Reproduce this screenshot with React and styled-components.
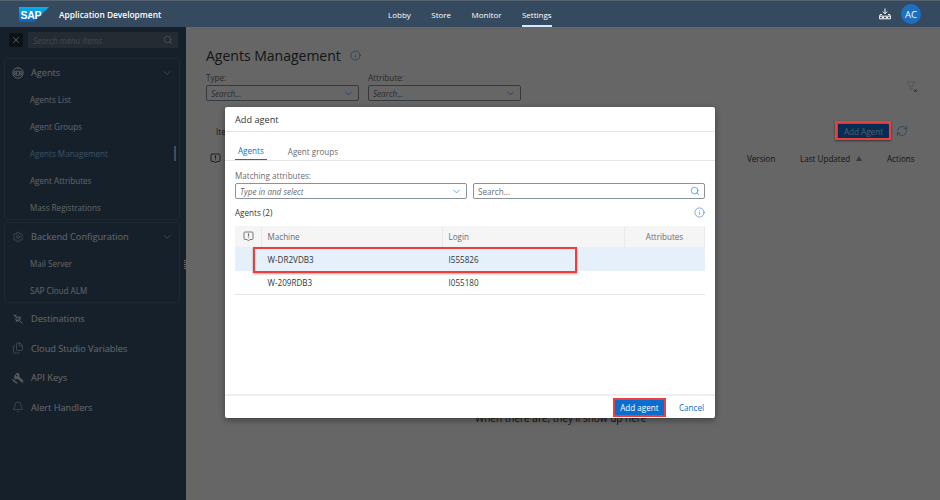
import React from 'react'
import styled, { createGlobalStyle } from 'styled-components'
import { Search, ChevronDown, Info, X, Settings, Bell, Files, RefreshCw } from 'lucide-react'

const GlobalStyle = createGlobalStyle`
  html, body { margin: 0; padding: 0; background: #fff; }
  * { box-sizing: border-box; }
  body { font-family: "Open Sans", "Noto Sans", "Liberation Sans", sans-serif; color: #32363a; }
`

const Page = styled.div`
  position: relative;
  width: 940px;
  height: 500px;
  overflow: hidden;
  display: flex;
  flex-direction: column;
`

const Header = styled.header`
  position: relative;
  z-index: 3;
  height: 27px;
  flex: none;
  background: #354a5f;
  border-top: 1px solid #54616e;
  display: flex;
  align-items: center;
  color: #fff;
`

const Brand = styled.div`
  width: 366px;
  padding-left: 19px;
  display: flex;
  align-items: center;
  gap: 10px;
`

const AppName = styled.span`
  font-size: 8.4px;
  font-weight: 600;
`

const Nav = styled.nav`
  display: flex;
  gap: 20.5px;
  height: 100%;
  padding-left: 22px;
`

const NavItem = styled.a`
  height: 100%;
  display: flex;
  align-items: center;
  font-size: 8px;
  color: #fff;
  border-bottom: 2px solid ${p => (p.$active ? '#d1e8ff' : 'transparent')};
  padding-top: 2px;
`

const Actions = styled.div`
  margin-left: auto;
  padding-right: 19px;
  display: flex;
  align-items: center;
  gap: 10px;
`

const Avatar = styled.div`
  width: 20px;
  height: 20px;
  border-radius: 50%;
  background: #1f6fc0;
  color: #fff;
  font-size: 9.5px;
  font-weight: 500;
  display: flex;
  align-items: center;
  justify-content: center;
`

const Body = styled.div`
  flex: 1;
  display: flex;
  min-height: 0;
`

const Sidebar = styled.aside`
  position: relative;
  width: 186px;
  flex: none;
  background: #37506b;
  padding: 5px 6px 0 4px;
  color: #fff;
`

const SearchRow = styled.div`
  display: flex;
  align-items: center;
  gap: 5px;
  padding: 0 2px 0 5px;
  margin-bottom: 10px;
`

const CloseBtn = styled.button`
  width: 14px;
  height: 14px;
  padding: 0;
  border: 0;
  border-radius: 2px;
  background: #1d2d3e;
  color: #fff;
  display: flex;
  align-items: center;
  justify-content: center;
`

const MenuSearch = styled.div`
  flex: 1;
  height: 16px;
  background: #5e6d7d;
  display: flex;
  align-items: center;
  justify-content: space-between;
  padding: 0 5px;
  font-size: 8.2px;
  font-style: italic;
  color: #a9b4be;
`

const Group = styled.section`
  height: ${p => p.$rows * 27}px;
  border: 1px solid #4a6480;
  border-radius: 3px;
  & + & {
    margin-top: 2px;
  }
`

const GroupHead = styled.div`
  height: 27px;
  display: flex;
  align-items: center;
  gap: 7px;
  padding: 0 6px 0 7px;
  font-size: 9.2px;
`

const Spacer = styled.span`
  margin-left: auto;
  display: flex;
`

const SubItem = styled.div`
  position: relative;
  height: 27px;
  display: flex;
  align-items: center;
  padding-left: 25px;
  font-size: 8.1px;
  color: ${p => (p.$active ? '#91c8f6' : '#f2f4f6')};
`

const ActiveBar = styled.span`
  position: absolute;
  right: 3px;
  top: 6px;
  width: 2px;
  height: 15px;
  background: #91c8f6;
`

const TopList = styled.div`
  margin-top: 1px;
`

const TopItem = styled.div`
  height: 29.5px;
  display: flex;
  align-items: center;
  gap: 7px;
  padding-left: 8px;
  font-size: 9.2px;
`

const Grip = styled.span`
  position: absolute;
  right: 0;
  top: 233px;
  width: 2px;
  height: 9px;
  background: repeating-linear-gradient(#fff 0 1px, transparent 1px 2px);
`

const Main = styled.main`
  flex: 1;
  background: #fff;
  padding: 18px 20px 0;
  display: flex;
  flex-direction: column;
  position: relative;
`

const TitleRow = styled.div`
  display: flex;
  align-items: center;
  gap: 9px;
  height: 20px;
  margin-bottom: 7px;
`

const Title = styled.h1`
  margin: 0;
  font-size: 14px;
  font-weight: 400;
  color: #32363a;
`

const Filters = styled.div`
  display: flex;
  gap: 9px;
  align-items: flex-end;
  margin-bottom: 22px;
`

const Field = styled.label`
  display: flex;
  flex-direction: column;
  gap: 2px;
  width: ${p => p.$width || '153px'};
  font-size: 8.1px;
  color: #6a6d70;
`

const Input = styled.div`
  height: 16px;
  border: 1px solid #89919a;
  border-radius: 2px;
  background: #fff;
  display: flex;
  align-items: center;
  justify-content: space-between;
  padding: 0 4px;
  font-size: 8.1px;
  font-style: ${p => (p.$plain ? 'normal' : 'italic')};
  color: #6a6d70;
`

const ClearFilter = styled.span`
  margin-left: auto;
  margin-right: 2px;
  align-self: center;
  display: flex;
`

const ToolBar = styled.div`
  display: flex;
  align-items: center;
  height: 16px;
  padding: 0 12px 0 10px;
  margin-bottom: 9px;
  font-size: 8.1px;
  color: #32363a;
`

const ToolButton = styled.button`
  margin-left: auto;
  width: 51px;
  height: 15px;
  border: 0;
  border-radius: 1px;
  background: #0a6ed1;
  color: #d1e8ff;
  font: inherit;
  padding: 0;
`

const Refresh = styled.span`
  display: flex;
  margin-left: 7px;
  color: #0a6ed1;
`

const ListHead = styled.div`
  height: 21px;
  padding-left: 4px;
  background: #fff;
  display: flex;
  align-items: center;
  font-size: 8.1px;
  color: #32363a;
`

const ListCol = styled.span`
  width: ${p => p.$width};
  margin-left: ${p => p.$offset || 0};
  display: flex;
  align-items: center;
  gap: 6px;
`

const EmptyNote = styled.div`
  position: absolute;
  left: 289px;
  top: 384px;
  font-size: 10px;
  color: #32363a;
`

const Scrim = styled.div`
  position: absolute;
  z-index: 2;
  left: 0;
  right: 0;
  top: 27px;
  bottom: 0;
  background: rgba(0, 0, 0, 0.6);
  display: flex;
  align-items: center;
  justify-content: center;
  padding-bottom: 2px;
`

const Marker = styled.span`
  position: absolute;
  right: 49px;
  top: 94px;
  width: 56px;
  height: 19px;
  border: 2px solid #ee3d3d;
  box-shadow: 0 1px 2px rgba(0, 0, 0, 0.5);
`

const Dialog = styled.div`
  width: 490px;
  height: 311px;
  background: #fff;
  border-radius: 2px;
  box-shadow: 0 2px 6px rgba(0, 0, 0, 0.4);
  display: flex;
  flex-direction: column;
  color: #32363a;
`

const DialogTitle = styled.div`
  height: 25px;
  flex: none;
  padding-left: 10px;
  display: flex;
  align-items: center;
  font-size: 9.2px;
  border-bottom: 1px solid #e5e5e5;
`

const Tabs = styled.div`
  height: 29px;
  flex: none;
  padding-left: 10px;
  display: flex;
  gap: 18px;
  border-bottom: 1px solid #e5e5e5;
`

const Tab = styled.div`
  height: 100%;
  padding: 10px 3px 0;
  display: flex;
  align-items: center;
  font-size: 8.1px;
  color: ${p => (p.$active ? '#0a6ed1' : '#6a6d70')};
  border-bottom: ${p => (p.$active ? '1.5px solid #0a6ed1' : '0')};
`

const DialogBody = styled.div`
  flex: 1;
  padding: 9px 10px 0;
  display: flex;
  flex-direction: column;
`

const FieldRow = styled.div`
  display: flex;
  align-items: flex-end;
  gap: 6px;
  margin-bottom: 7px;
`

const SectionRow = styled.div`
  height: 13px;
  display: flex;
  align-items: center;
  justify-content: space-between;
  font-size: 8.1px;
  color: #32363a;
  margin-bottom: 7px;
`

const Row = styled.div`
  position: relative;
  display: grid;
  grid-template-columns: 27px 181px 182px 80px;
  height: ${p => (p.$head ? '21px' : '24px')};
  background: ${p => (p.$head ? '#f5f5f5' : p.$selected ? '#e5f0fa' : '#fff')};
  border-bottom: ${p => (p.$head || p.$selected ? '0' : '1px solid #e5e5e5')};
  font-size: 8.1px;
`

const Cell = styled.div`
  display: flex;
  align-items: center;
  justify-content: ${p => (p.$center ? 'center' : 'flex-start')};
  padding-left: ${p => (p.$center ? '0' : '5.5px')};
  border-right: ${p => (p.$head ? '1px solid #eaeaea' : '0')};
  color: ${p => (p.$head ? '#6a6d70' : '#32363a')};
`

const RowMarker = styled.span`
  position: absolute;
  z-index: 1;
  left: 18px;
  top: 0;
  width: 324px;
  height: 26px;
  border: 2px solid #ee3d3d;
  box-shadow: 0 1px 2px rgba(0, 0, 0, 0.35);
`

const Footer = styled.div`
  height: 24px;
  flex: none;
  border-top: 2px solid #eeeeee;
  display: flex;
  align-items: center;
  justify-content: flex-end;
  gap: 15px;
  padding-right: 11px;
  font-size: 8.1px;
`

const Primary = styled.button`
  width: 49px;
  height: 15px;
  padding: 0;
  border: 0;
  background: #0a6ed1;
  color: #fff;
  font: inherit;
  font-weight: 500;
  outline: 2px solid #ee3d3d;
`

const Ghost = styled.button`
  padding: 0;
  border: 0;
  background: none;
  color: #0a6ed1;
  font: inherit;
`

const SortMark = styled.span`
  width: 0;
  height: 0;
  border-left: 3.5px solid transparent;
  border-right: 3.5px solid transparent;
  border-bottom: 5px solid #8a8d90;
`

const SapLogo = () => (
  <svg width="30" height="15" viewBox="0 0 30 15">
    <defs>
      <linearGradient id="sap" x1="0" y1="0" x2="0" y2="1">
        <stop offset="0" stopColor="#00b4f0" />
        <stop offset="1" stopColor="#0a5fc0" />
      </linearGradient>
    </defs>
    <polygon points="0,0 30,0 15,15 0,15" fill="url(#sap)" />
    <text x="1.5" y="11.5" fontSize="10.5" fontWeight="700" fill="#fff" fontFamily="Liberation Sans, sans-serif" letterSpacing="-0.3">SAP</text>
  </svg>
)

const InstallIcon = () => (
  <svg width="12" height="12" viewBox="0 0 12 12" fill="none" stroke="#fff" strokeWidth="1">
    <path d="M6 .5v5M3.8 3.6 6 5.8l2.2-2.2" />
    <path d="M3 6.5H1.2L.6 8.2v2.6h10.8V8.2l-.6-1.7H9" />
    <path d="M.6 8.2h10.8" />
    <path d="M3 9.5h2M7 9.5h2" />
  </svg>
)

const AgentIcon = () => (
  <svg width="12" height="12" viewBox="0 0 12 12" fill="none" stroke="#fff" strokeWidth="0.9">
    <circle cx="6" cy="6" r="5.2" />
    <rect x="2" y="4.2" width="8" height="4" rx="2" />
    <circle cx="4.3" cy="6.2" r="0.7" fill="#fff" />
    <circle cx="7.7" cy="6.2" r="0.7" fill="#fff" />
    <path d="M6 .8v1.5" />
  </svg>
)

const DestinationIcon = () => (
  <svg width="12" height="12" viewBox="0 0 12 12" fill="none" stroke="#fff" strokeWidth="0.9">
    <path d="M1.5 1.5 5 4.5M7.5 7.5l3 3M4 1.5 2.5 3.5" />
    <circle cx="6" cy="6" r="2.2" />
    <path d="M8.8 3.6 4 8.8" />
  </svg>
)

const KeysIcon = () => (
  <svg width="12" height="12" viewBox="0 0 12 12" fill="#fff" fillOpacity="0.8" stroke="none">
    <path d="M4.2 1.5 6 .8l1.6 1.6-.6 1.9L11.4 8.7 11 10.6 9.2 10.2 8.6 9.2 7.6 9 7.4 8 6 7.4 5.4 6.8 3.6 7.4 2 5.8 2.6 3.6z" />
    <path d="M.8 6.4 3.8 9.4 6.4 11 4.4 11.4 1.2 9.4.4 7.6z" />
    <circle cx="4.6" cy="3.6" r="0.8" fill="#37506b" fillOpacity="1" />
  </svg>
)

const ClearFilterIcon = () => (
  <svg width="12" height="12" viewBox="0 0 12 12" fill="none" stroke="#c5d0da" strokeWidth="0.9">
    <path d="M.8 1h8.4L6 5v4.2L4 7.8V5z" />
    <path d="m8.2 8.4 2.6 2.6m0-2.6-2.6 2.6" stroke="#0a6ed1" />
  </svg>
)

const NoteIcon = ({ color = '#32363a' }) => (
  <svg width="11" height="11" viewBox="0 0 11 11" fill="none" stroke={color} strokeWidth="0.9">
    <path d="M2 1h7a1 1 0 0 1 1 1v5.5a1 1 0 0 1-1 1H6.8L5.5 10 4.2 8.5H2a1 1 0 0 1-1-1V2a1 1 0 0 1 1-1z" />
    <path d="M5.5 2.6v3M5.5 6.4v.9" strokeWidth="1.1" />
  </svg>
)

const subChevron = <Spacer><ChevronDown size={12} strokeWidth={1} /></Spacer>

export default function App() {
  return (
    <Page>
      <GlobalStyle />
      <Header>
        <Brand>
          <SapLogo />
          <AppName>Application Development</AppName>
        </Brand>
        <Nav>
          <NavItem>Lobby</NavItem>
          <NavItem>Store</NavItem>
          <NavItem>Monitor</NavItem>
          <NavItem $active>Settings</NavItem>
        </Nav>
        <Actions>
          <InstallIcon />
          <Avatar>AC</Avatar>
        </Actions>
      </Header>
      <Body>
        <Sidebar>
          <SearchRow>
            <CloseBtn><X size={10} strokeWidth={2} /></CloseBtn>
            <MenuSearch>
              Search menu items
              <Search size={10} strokeWidth={1.3} color="#fff" />
            </MenuSearch>
          </SearchRow>
          <Group $rows={6}>
            <GroupHead><AgentIcon />Agents{subChevron}</GroupHead>
            <SubItem>Agents List</SubItem>
            <SubItem>Agent Groups</SubItem>
            <SubItem $active>Agents Management<ActiveBar /></SubItem>
            <SubItem>Agent Attributes</SubItem>
            <SubItem>Mass Registrations</SubItem>
          </Group>
          <Group $rows={3}>
            <GroupHead><Settings size={12} strokeWidth={1} />Backend Configuration{subChevron}</GroupHead>
            <SubItem>Mail Server</SubItem>
            <SubItem>SAP Cloud ALM</SubItem>
          </Group>
          <TopList>
            <TopItem><DestinationIcon />Destinations</TopItem>
            <TopItem><Files size={12} strokeWidth={1} />Cloud Studio Variables</TopItem>
            <TopItem><KeysIcon />API Keys</TopItem>
            <TopItem><Bell size={12} strokeWidth={1} />Alert Handlers</TopItem>
          </TopList>
          <Grip />
        </Sidebar>
        <Main>
          <TitleRow>
            <Title>Agents Management</Title>
            <Info size={11} strokeWidth={1.2} color="#0a6ed1" />
          </TitleRow>
          <Filters>
            <Field>
              Type:
              <Input>Search...<ChevronDown size={11} strokeWidth={1.3} color="#0a6ed1" /></Input>
            </Field>
            <Field>
              Attribute:
              <Input>Search...<ChevronDown size={11} strokeWidth={1.3} color="#0a6ed1" /></Input>
            </Field>
            <ClearFilter><ClearFilterIcon /></ClearFilter>
          </Filters>
          <ToolBar>
            Items (0)
            <ToolButton>Add Agent</ToolButton>
            <Refresh><RefreshCw size={12} strokeWidth={1} /></Refresh>
          </ToolBar>
          <ListHead>
            <NoteIcon />
            <ListCol $offset="526px" $width="53px">Version</ListCol>
            <ListCol $width="87px">Last Updated <SortMark /></ListCol>
            <ListCol>Actions</ListCol>
          </ListHead>
          <EmptyNote>When there are, they'll show up here</EmptyNote>
        </Main>
      </Body>
      <Scrim>
        <Marker />
        <Dialog>
          <DialogTitle>Add agent</DialogTitle>
          <Tabs>
            <Tab $active>Agents</Tab>
            <Tab>Agent groups</Tab>
          </Tabs>
          <DialogBody>
            <FieldRow>
              <Field $width="232px">
                Matching attributes:
                <Input>Type in and select<ChevronDown size={11} strokeWidth={1.3} color="#0a6ed1" /></Input>
              </Field>
              <Field $width="232px">
                <Input $plain>Search...<Search size={10} strokeWidth={1.4} color="#0a6ed1" /></Input>
              </Field>
            </FieldRow>
            <SectionRow>
              Agents (2)
              <Info size={11} strokeWidth={1.2} color="#0a6ed1" />
            </SectionRow>
            <Row $head>
              <Cell $head $center><NoteIcon color="#6a6d70" /></Cell>
              <Cell $head>Machine</Cell>
              <Cell $head>Login</Cell>
              <Cell $head $center>Attributes</Cell>
            </Row>
            <Row $selected>
              <Cell />
              <Cell>W-DR2VDB3</Cell>
              <Cell>I555826</Cell>
              <Cell />
              <RowMarker />
            </Row>
            <Row>
              <Cell />
              <Cell>W-209RDB3</Cell>
              <Cell>I055180</Cell>
              <Cell />
            </Row>
          </DialogBody>
          <Footer>
            <Primary>Add agent</Primary>
            <Ghost>Cancel</Ghost>
          </Footer>
        </Dialog>
      </Scrim>
    </Page>
  )
}
